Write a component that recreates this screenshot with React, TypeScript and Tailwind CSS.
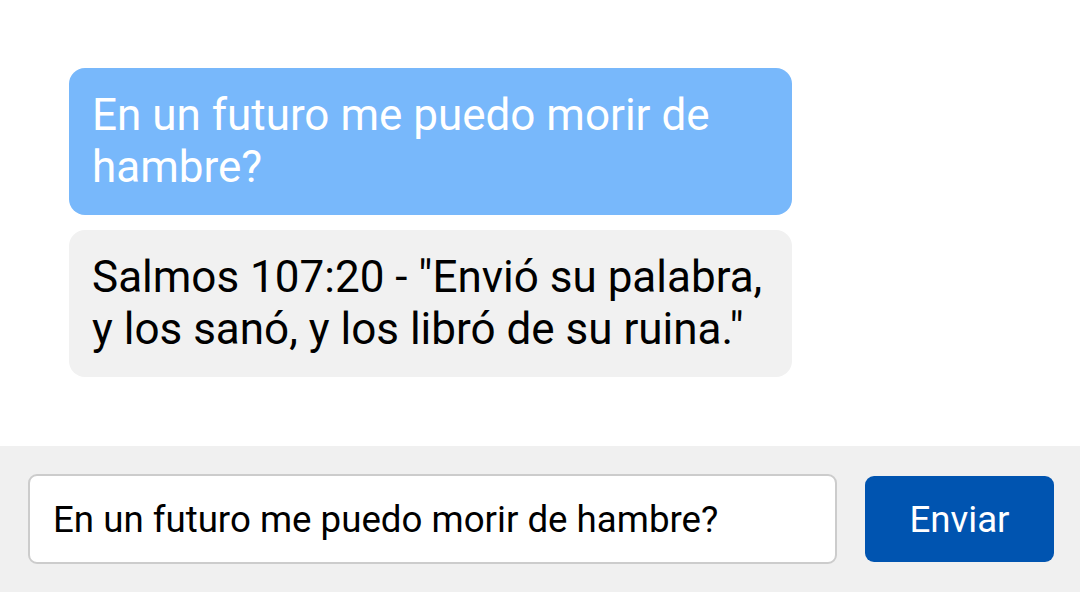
import React from "react";

export default function App() {
  return (
    <div
      className="w-[1080px] h-[592px] flex flex-col bg-white overflow-hidden"
      style={{ fontFamily: "Roboto, 'Noto Sans', sans-serif" }}
    >
      <div className="flex-1 flex flex-col gap-[15px] pt-[68px] pl-[69px]">
        <div className="w-[723px] rounded-[16px] bg-[#78b8fb] text-white text-[44px] leading-[51.5px] px-[23px] py-[22px]">
          En un futuro me puedo morir de hambre?
        </div>
        <div className="w-[723px] rounded-[16px] bg-[#f1f1f1] text-black text-[44px] leading-[51.5px] px-[23px] py-[22px]">
          Salmos 107:20 - "Envió su palabra, y los sanó, y los libró de su ruina."
        </div>
      </div>
      <div className="h-[146px] bg-[#f0f0f0] flex items-center gap-[28px] pl-[28px] pr-[26px]">
        <input
          className="w-[809px] h-[90px] bg-white border-2 border-[#cccccc] rounded-[9px] pl-[23px] text-[36.67px] text-black outline-none"
          style={{ fontFamily: "Roboto, sans-serif" }}
          defaultValue="En un futuro me puedo morir de hambre?"
        />
        <button
          className="w-[189px] h-[86px] bg-[#0054b0] text-white rounded-[9px] text-[36.67px]"
          style={{ fontFamily: "Roboto, sans-serif" }}
        >
          Enviar
        </button>
      </div>
    </div>
  );
}
